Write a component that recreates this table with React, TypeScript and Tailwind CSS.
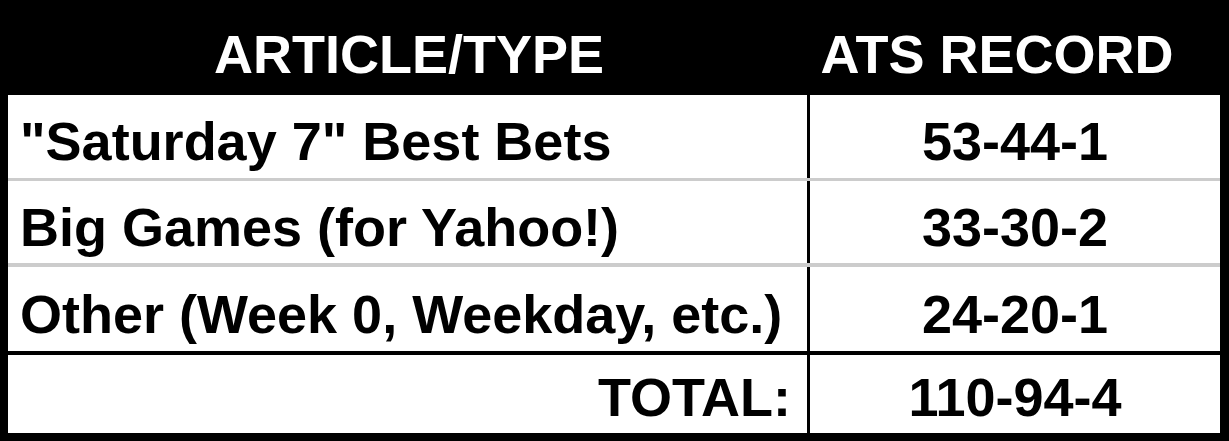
import React from "react";

interface RecordRow {
  label: string;
  record: string;
  line: string;
}

const rows: RecordRow[] = [
  { label: '"Saturday 7" Best Bets', record: "53-44-1", line: "h-[86px] border-b-[3px] border-[#cccccc]" },
  { label: "Big Games (for Yahoo!)", record: "33-30-2", line: "h-[86px] border-b-[4px] border-[#cccccc]" },
  { label: "Other (Week 0, Weekday, etc.)", record: "24-20-1", line: "h-[88px] border-b-[4px] border-black" },
];

const App = () => {
  return (
    <div className="w-[1229px] h-[441px] bg-black pl-[8px] pr-[9px] pb-[8px] flex flex-col font-['Liberation_Sans',Arial,sans-serif] font-bold text-[54px] leading-[60px]">
      {/* HEADER */}
      <div className="flex h-[95px] text-white">
        <div className="w-[802px] flex items-center justify-center pt-[12px]">ARTICLE/TYPE</div>
        <div className="flex-1 flex items-center justify-center pt-[12px] pr-[36px]">ATS RECORD</div>
      </div>

      {/* BODY */}
      <div className="flex-1 flex flex-col bg-white text-black">
        {rows.map((row) => (
          <div key={row.label} className={`flex ${row.line}`}>
            <div className="w-[802px] border-r-[3px] border-black flex items-center pl-[12px] pt-[9px]">
              {row.label}
            </div>
            <div className="flex-1 flex items-center justify-center pt-[9px]">{row.record}</div>
          </div>
        ))}
        <div className="flex flex-1">
          <div className="w-[802px] border-r-[3px] border-black flex items-center justify-end pr-[16px] pt-[6px]">
            TOTAL:
          </div>
          <div className="flex-1 flex items-center justify-center pt-[6px]">110-94-4</div>
        </div>
      </div>
    </div>
  );
};

export default App;
